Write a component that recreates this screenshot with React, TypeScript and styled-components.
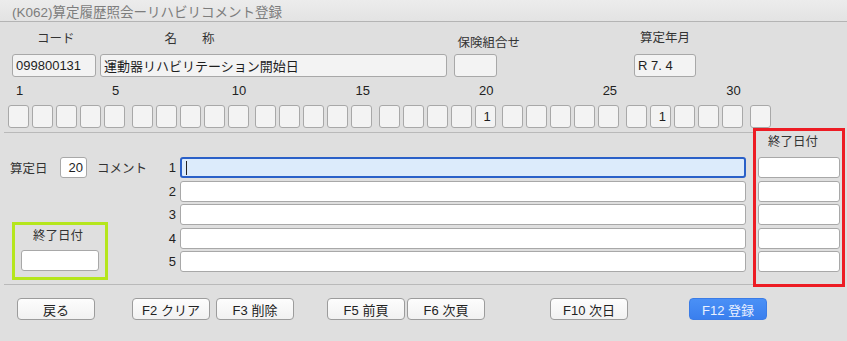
import styled, { createGlobalStyle } from 'styled-components';

const GlobalStyle = createGlobalStyle`
	html, body {
		margin: 0;
		padding: 0;
		background: #dfdfdf;
	}
	body {
		font-family: 'Liberation Sans', 'Noto Sans CJK JP', sans-serif;
		color: #2b2b2b;
	}
	* {
		box-sizing: border-box;
	}
`;

const dayGroups = [
	[1, 2, 3, 4, 5],
	[6, 7, 8, 9, 10],
	[11, 12, 13, 14, 15],
	[16, 17, 18, 19, 20],
	[21, 22, 23, 24, 25],
	[26, 27, 28, 29, 30],
	[31],
];

const dayValues: Record<number, string> = { 20: '1', 27: '1' };
const labeledDays = [1, 5, 10, 15, 20, 25, 30];
const commentRows = [1, 2, 3, 4, 5];

export default function App() {
	return (
		<Window>
			<GlobalStyle />
			<TitleBar>(K062)算定履歴照会ーリハビリコメント登録</TitleBar>

			<Header>
				<LabelRow>
					<Label $ml={37}>コード</Label>
					<Label $ml={90}>名　　称</Label>
					<Label $ml={243} $mt={4}>保険組合せ</Label>
					<Label $ml={120} $mt={-1}>算定年月</Label>
				</LabelRow>
				<InputRow>
					<Field $w={84} $ml={12}>099800131</Field>
					<Field $w={347} $ml={4}>運動器リハビリテーション開始日</Field>
					<Field $w={43} $ml={7} />
					<Field $w={62} $ml={137}>R 7. 4</Field>
				</InputRow>
			</Header>

			<DaysRow>
				{dayGroups.map((group, gi) => (
					<DayGroup key={gi}>
						{group.map((d) => (
							<DayCell key={d}>
								<DayLabel>{labeledDays.includes(d) ? d : ''}</DayLabel>
								<DayBox>{dayValues[d] ?? ''}</DayBox>
							</DayCell>
						))}
					</DayGroup>
				))}
			</DaysRow>

			<MainRow>
				<LeftArea>
					<LeftPanel>
						<TopLine>
							<SmallLabel>算定日</SmallLabel>
							<DayInput>20</DayInput>
							<SmallLabel $ml={10}>コメント</SmallLabel>
						</TopLine>
						<GreenBox>
							<BoxLabel $pl={18}>終了日付</BoxLabel>
							<WhiteField $w={78} />
						</GreenBox>
					</LeftPanel>

					<CommentList>
						{commentRows.map((n) => (
							<CommentRow key={n}>
								<RowNumber>{n}</RowNumber>
								{n === 1 ? (
									<FocusedField>
										<Caret />
									</FocusedField>
								) : (
									<WhiteField />
								)}
							</CommentRow>
						))}
					</CommentList>
				</LeftArea>

				<RedBox>
					<BoxLabel $pl={12}>終了日付</BoxLabel>
					<EndDateList>
						{commentRows.map((n) => (
							<WhiteField key={n} $w={82} />
						))}
					</EndDateList>
				</RedBox>
			</MainRow>

			<Footer>
				<Button $ml={17}>戻る</Button>
				<Button $ml={37}>F2 クリア</Button>
				<Button $ml={6}>F3 削除</Button>
				<Button $ml={33}>F5 前頁</Button>
				<Button $ml={2}>F6 次頁</Button>
				<Button $ml={65}>F10 次日</Button>
				<Button $ml={61} $primary>F12 登録</Button>
			</Footer>
		</Window>
	);
}

const Window = styled.div`
	display: flex;
	flex-direction: column;
	width: 847px;
	height: 341px;
	background: #dfdfdf;
	overflow: hidden;
`;

const TitleBar = styled.div`
	height: 22px;
	padding-left: 12px;
	display: flex;
	align-items: center;
	font-size: 13.5px;
	color: #7d7d7d;
	background: linear-gradient(#ececec, #e3e3e3);
	border-bottom: 1px solid #b4b4b4;
`;

const Header = styled.div`
	display: flex;
	flex-direction: column;
	padding-top: 9px;
`;

const LabelRow = styled.div`
	display: flex;
	align-items: flex-start;
	height: 16px;
`;

const Label = styled.div<{ $ml: number; $mt?: number }>`
	margin-left: ${(p) => p.$ml}px;
	margin-top: ${(p) => p.$mt ?? 0}px;
	font-size: 12.5px;
	line-height: 16px;
	color: #333;
	white-space: nowrap;
`;

const InputRow = styled.div`
	display: flex;
	margin-top: 7px;
`;

const Field = styled.div<{ $w: number; $ml: number }>`
	width: ${(p) => p.$w}px;
	height: 23px;
	margin-left: ${(p) => p.$ml}px;
	padding: 0 3px;
	display: flex;
	align-items: center;
	font-size: 13px;
	color: #1e1e1e;
	background: #f3f3f3;
	border: 1px solid #a8a8a8;
	border-radius: 3px;
	white-space: nowrap;
	overflow: hidden;
`;

const DaysRow = styled.div`
	display: flex;
	gap: 6.6px;
	padding-left: 8px;
	margin-top: 7px;
`;

const DayGroup = styled.div`
	display: flex;
	gap: 3px;
`;

const DayCell = styled.div`
	display: flex;
	flex-direction: column;
	align-items: center;
	gap: 7px;
`;

const DayLabel = styled.div`
	height: 14px;
	padding-left: 2px;
	font-size: 13px;
	line-height: 14px;
	color: #222;
	white-space: nowrap;
`;

const DayBox = styled.div`
	width: 21px;
	height: 23px;
	display: flex;
	align-items: center;
	justify-content: flex-end;
	padding-right: 4px;
	font-size: 13px;
	color: #1e1e1e;
	background: #f3f3f3;
	border: 1px solid #a8a8a8;
	border-radius: 3px;
`;

const MainRow = styled.div`
	display: flex;
	height: 159px;
`;

const LeftArea = styled.div`
	flex: 1;
	display: flex;
	margin: 4px 0 2px 4px;
	padding: 24px 0 0 6px;
	border-top: 1px solid #b9b9b9;
	border-bottom: 1px solid #b9b9b9;
`;

const LeftPanel = styled.div`
	width: 155px;
	display: flex;
	flex-direction: column;
`;

const TopLine = styled.div`
	display: flex;
	align-items: center;
	height: 21px;
`;

const SmallLabel = styled.div<{ $ml?: number }>`
	margin-left: ${(p) => p.$ml ?? 0}px;
	font-size: 12.5px;
	color: #333;
	white-space: nowrap;
`;

const DayInput = styled.div`
	width: 27px;
	height: 21px;
	margin-left: 12.5px;
	padding-right: 3px;
	display: flex;
	align-items: center;
	justify-content: flex-end;
	font-size: 13px;
	color: #1e1e1e;
	background: #fff;
	border: 1px solid #a8a8a8;
	border-radius: 3px;
`;

const GreenBox = styled.div`
	width: 96px;
	height: 58px;
	margin: 44px 0 0 2px;
	padding: 3px 0 0 6px;
	display: flex;
	flex-direction: column;
	gap: 6px;
	border: 3px solid #b5e61d;
`;

const BoxLabel = styled.div<{ $pl: number }>`
	padding-left: ${(p) => p.$pl - 6}px;
	height: 16px;
	font-size: 12.5px;
	line-height: 16px;
	color: #333;
	white-space: nowrap;
`;

const WhiteField = styled.div<{ $w?: number }>`
	width: ${(p) => (p.$w ? `${p.$w}px` : 'auto')};
	flex: ${(p) => (p.$w ? 'none' : '1')};
	height: 21px;
	background: #fff;
	border: 1px solid #a8a8a8;
	border-radius: 3px;
`;

const CommentList = styled.div`
	flex: 1;
	display: flex;
	flex-direction: column;
	gap: 2.5px;
	padding-right: 7px;
`;

const CommentRow = styled.div`
	display: flex;
	align-items: center;
	gap: 4px;
`;

const RowNumber = styled.div`
	width: 11px;
	text-align: right;
	font-size: 13px;
	color: #222;
`;

const FocusedField = styled.div`
	flex: 1;
	height: 21px;
	padding-left: 4px;
	display: flex;
	align-items: center;
	background: #dcebfb;
	border: 2px solid #2a60c8;
	border-radius: 3px;
`;

const Caret = styled.span`
	width: 1px;
	height: 14px;
	background: #222;
`;

const RedBox = styled.div`
	width: 92px;
	height: 159px;
	margin-right: 2px;
	padding: 3px 0 0 6px;
	display: flex;
	flex-direction: column;
	gap: 7px;
	border: 3px solid #ed1c24;
`;

const EndDateList = styled.div`
	display: flex;
	flex-direction: column;
	gap: 2.5px;
	margin-left: -4px;
`;

const Footer = styled.div`
	display: flex;
	padding-top: 11px;
`;

const Button = styled.div<{ $ml: number; $primary?: boolean }>`
	width: 78px;
	height: 22px;
	margin-left: ${(p) => p.$ml}px;
	display: flex;
	align-items: center;
	justify-content: center;
	font-size: 13px;
	white-space: nowrap;
	border-radius: 4px;
	color: ${(p) => (p.$primary ? '#eaf1ff' : '#222')};
	background: ${(p) =>
		p.$primary
			? 'linear-gradient(#4a90f6, #3a7fee)'
			: 'linear-gradient(#fdfdfd, #f1f1f1)'};
	border: 1px solid ${(p) => (p.$primary ? '#3b7ce6' : '#9c9c9c')};
`;
